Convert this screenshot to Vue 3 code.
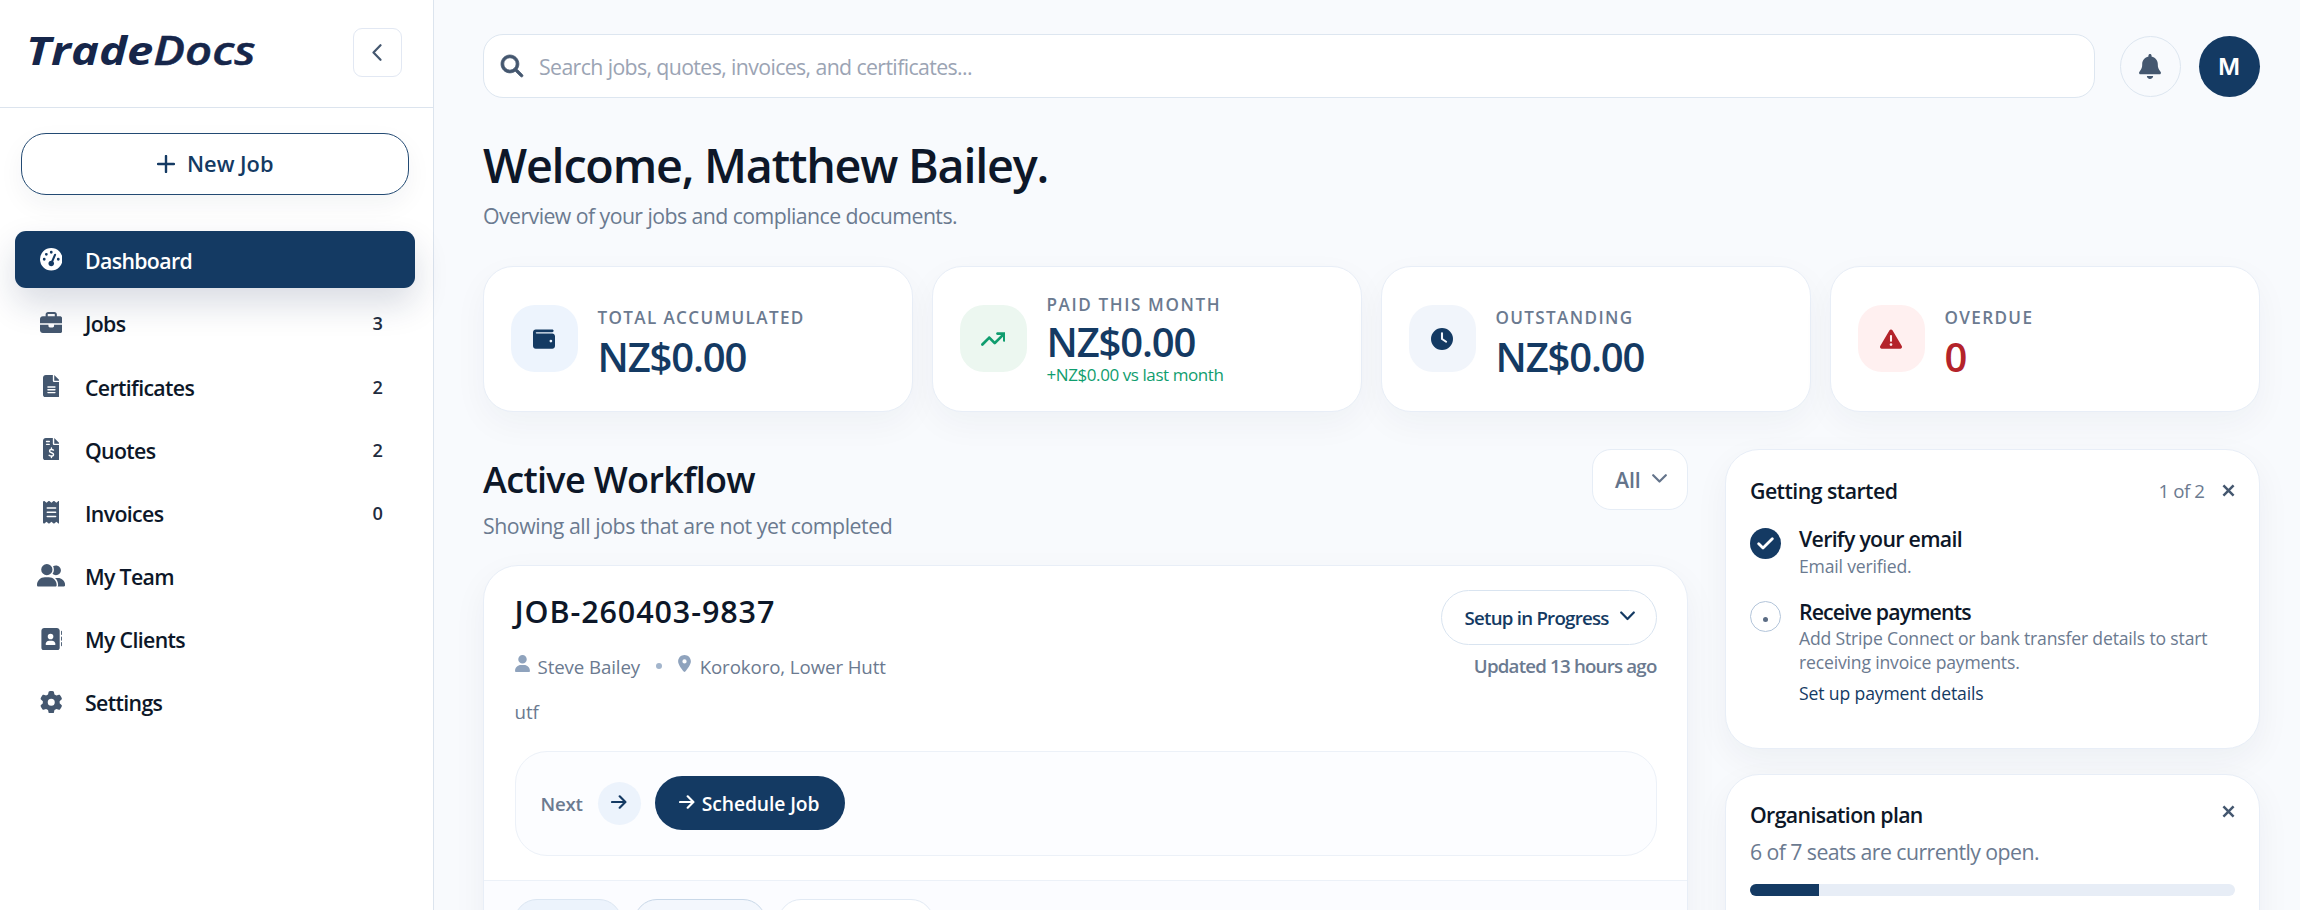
<script setup>
const icons = {
  gauge: { box: '0 0 512 512', d: 'M0 256a256 256 0 1 1 512 0A256 256 0 1 1 0 256zM288 96a32 32 0 1 0 -64 0 32 32 0 1 0 64 0zM256 416c35.3 0 64-28.7 64-64c0-17.4-6.9-33.1-18.1-44.6L366 161.7c5.3-12.1-.2-26.3-12.3-31.6s-26.3 .2-31.6 12.3L257.9 288c-.6 0-1.3 0-1.9 0c-35.3 0-64 28.7-64 64s28.7 64 64 64zM176 144a32 32 0 1 0 -64 0 32 32 0 1 0 64 0zM96 288a32 32 0 1 0 0-64 32 32 0 1 0 0 64zm352-32a32 32 0 1 0 -64 0 32 32 0 1 0 64 0z' },
  briefcase: { box: '0 0 512 512', d: 'M184 48H328c4.4 0 8 3.6 8 8V96H176V56c0-4.4 3.6-8 8-8zm-56 8V96H64C28.7 96 0 124.7 0 160v96H192 320 512V160c0-35.3-28.7-64-64-64H384V56c0-30.9-25.1-56-56-56H184c-30.9 0-56 25.1-56 56zM512 288H320v32c0 17.7-14.3 32-32 32H224c-17.7 0-32-14.3-32-32V288H0V416c0 35.3 28.7 64 64 64H448c35.3 0 64-28.7 64-64V288z' },
  file: { box: '0 0 384 512', d: 'M64 0C28.7 0 0 28.7 0 64V448c0 35.3 28.7 64 64 64H320c35.3 0 64-28.7 64-64V160H256c-17.7 0-32-14.3-32-32V0H64zM256 0V128H384L256 0zM112 256H272c8.8 0 16 7.2 16 16s-7.2 16-16 16H112c-8.8 0-16-7.2-16-16s7.2-16 16-16zm0 64H272c8.8 0 16 7.2 16 16s-7.2 16-16 16H112c-8.8 0-16-7.2-16-16s7.2-16 16-16zm0 64H272c8.8 0 16 7.2 16 16s-7.2 16-16 16H112c-8.8 0-16-7.2-16-16s7.2-16 16-16z' },
  quote: { box: '0 0 384 512', d: 'M64 0C28.7 0 0 28.7 0 64V448c0 35.3 28.7 64 64 64H320c35.3 0 64-28.7 64-64V160H256c-17.7 0-32-14.3-32-32V0H64zM256 0V128H384L256 0zM64 80c0-8.8 7.2-16 16-16h64c8.8 0 16 7.2 16 16s-7.2 16-16 16H80c-8.8 0-16-7.2-16-16zm0 64c0-8.8 7.2-16 16-16h64c8.8 0 16 7.2 16 16s-7.2 16-16 16H80c-8.8 0-16-7.2-16-16z', line: 'M192 228v32M192 412v34M238 276c-14-8-30-13-46-13c-26 0-44 12-44 34c0 52 92 24 92 76c0 24-20 36-48 36c-18 0-36-6-52-14' },
  receipt: { box: '0 0 384 512', d: 'M14 2.2C22.5-1.7 32.5-.3 39.6 5.8L80 40.4 120.4 5.8c9-7.7 22.3-7.7 31.2 0L192 40.4 232.4 5.8c9-7.7 22.3-7.7 31.2 0L304 40.4 344.4 5.8c7.1-6.1 17.1-7.5 25.6-3.6s14 12.4 14 21.8V488c0 9.4-5.5 17.9-14 21.8s-18.5 2.5-25.6-3.6L304 471.6l-40.4 34.6c-9 7.7-22.3 7.7-31.2 0L192 471.6l-40.4 34.6c-9 7.7-22.3 7.7-31.2 0L80 471.6 39.6 506.2c-7.1 6.1-17.1 7.5-25.6 3.6S0 497.4 0 488V24C0 14.6 5.5 6.1 14 2.2zM96 144c-8.8 0-16 7.2-16 16s7.2 16 16 16H288c8.8 0 16-7.2 16-16s-7.2-16-16-16H96zM80 352c0 8.8 7.2 16 16 16H288c8.8 0 16-7.2 16-16s-7.2-16-16-16H96c-8.8 0-16 7.2-16 16zM96 240c-8.8 0-16 7.2-16 16s7.2 16 16 16H288c8.8 0 16-7.2 16-16s-7.2-16-16-16H96z' },
  team: { box: '0 0 640 512', d: 'M96 128a128 128 0 1 1 256 0A128 128 0 1 1 96 128zM0 482.3C0 383.8 79.8 304 178.3 304h91.4C368.2 304 448 383.8 448 482.3c0 16.4-13.3 29.7-29.7 29.7H29.7C13.3 512 0 498.7 0 482.3zM609.3 512H471.4c5.4-9.4 8.6-20.3 8.6-32v-8c0-60.7-27.1-115.2-69.8-151.8c2.4-.1 4.7-.2 7.1-.2h61.4C567.8 320 640 392.2 640 481.3c0 17-13.8 30.7-30.7 30.7zM432 256c-31 0-59-12.6-79.3-32.9C372.4 196.5 384 163.6 384 128c0-26.8-6.6-52.1-18.3-74.3C384.3 40.1 407.2 32 432 32c61.9 0 112 50.1 112 112s-50.1 112-112 112z' },
  clients: { box: '0 0 512 512', d: 'M96 0C60.7 0 32 28.7 32 64V448c0 35.3 28.7 64 64 64H384c35.3 0 64-28.7 64-64V64c0-35.3-28.7-64-64-64H96zM208 288h64c44.2 0 80 35.8 80 80c0 8.8-7.2 16-16 16H144c-8.8 0-16-7.2-16-16c0-44.2 35.8-80 80-80zm-32-96a64 64 0 1 1 128 0 64 64 0 1 1 -128 0zM512 80c0-8.8-7.2-16-16-16s-16 7.2-16 16v64c0 8.8 7.2 16 16 16s16-7.2 16-16V80zM496 192c-8.8 0-16 7.2-16 16v64c0 8.8 7.2 16 16 16s16-7.2 16-16V208c0-8.8-7.2-16-16-16zm16 144c0-8.8-7.2-16-16-16s-16 7.2-16 16v64c0 8.8 7.2 16 16 16s16-7.2 16-16V336z' },
  gear: { box: '0 0 512 512', d: 'M495.9 166.6c3.2 8.7 .5 18.4-6.4 24.6l-43.3 39.4c1.1 8.3 1.7 16.8 1.7 25.4s-.6 17.1-1.7 25.4l43.3 39.4c6.9 6.2 9.6 15.9 6.4 24.6c-4.4 11.9-9.7 23.3-15.8 34.3l-4.7 8.1c-6.6 11-14 21.4-22.1 31.2c-5.9 7.2-15.7 9.6-24.5 6.8l-55.7-17.7c-13.4 10.3-28.2 18.9-44 25.4l-12.5 57.1c-2 9.1-9 16.3-18.2 17.8c-13.8 2.3-28 3.5-42.5 3.5s-28.7-1.2-42.5-3.5c-9.2-1.5-16.2-8.7-18.2-17.8l-12.5-57.1c-15.8-6.5-30.6-15.1-44-25.4L83.1 425.9c-8.8 2.8-18.6 .3-24.5-6.8c-8.1-9.8-15.5-20.2-22.1-31.2l-4.7-8.1c-6.1-11-11.4-22.4-15.8-34.3c-3.2-8.7-.5-18.4 6.4-24.6l43.3-39.4C64.6 273.1 64 264.6 64 256s.6-17.1 1.7-25.4L22.4 191.2c-6.9-6.2-9.6-15.9-6.4-24.6c4.4-11.9 9.7-23.3 15.8-34.3l4.7-8.1c6.6-11 14-21.4 22.1-31.2c5.9-7.2 15.7-9.6 24.5-6.8l55.7 17.7c13.4-10.3 28.2-18.9 44-25.4l12.5-57.1c2-9.1 9-16.3 18.2-17.8C227.3 1.2 241.5 0 256 0s28.7 1.2 42.5 3.5c9.2 1.5 16.2 8.7 18.2 17.8l12.5 57.1c15.8 6.5 30.6 15.1 44 25.4l55.7-17.7c8.8-2.8 18.6-.3 24.5 6.8c8.1 9.8 15.5 20.2 22.1 31.2l4.7 8.1c6.1 11 11.4 22.4 15.8 34.3zM256 336a80 80 0 1 0 0-160 80 80 0 1 0 0 160z' },
  wallet: { box: '0 0 512 512', d: 'M64 32C28.7 32 0 60.7 0 96V416c0 35.3 28.7 64 64 64H448c35.3 0 64-28.7 64-64V192c0-35.3-28.7-64-64-64H80c-8.8 0-16-7.2-16-16s7.2-16 16-16H448c17.7 0 32-14.3 32-32s-14.3-32-32-32H64zM416 272a32 32 0 1 1 0 64 32 32 0 1 1 0-64z' },
  trend: { box: '0 0 576 512', d: 'M384 96c-17.7 0-32 14.3-32 32s14.3 32 32 32h82.7L320 306.7l-105.4-105.3c-12.5-12.5-32.8-12.5-45.3 0l-160 160c-12.5 12.5-12.5 32.8 0 45.3s32.8 12.5 45.3 0L192 269.3l105.4 105.3c12.5 12.5 32.8 12.5 45.3 0L512 205.3V288c0 17.7 14.3 32 32 32s32-14.3 32-32V128c0-17.7-14.3-32-32-32H384z' },
  clock: { box: '0 0 512 512', d: 'M256 0a256 256 0 1 1 0 512A256 256 0 1 1 256 0zM232 120V256c0 8 4 15.5 10.7 20l96 64c11 7.4 25.9 4.4 33.3-6.7s4.4-25.9-6.7-33.3L280 243.2V120c0-13.3-10.7-24-24-24s-24 10.7-24 24z' },
  warning: { box: '0 0 512 512', d: 'M256 32c14.2 0 27.3 7.5 34.5 19.8l216 368c7.3 12.4 7.3 27.7 .2 40.1S486.3 480 472 480H40c-14.3 0-27.6-7.7-34.7-20.1s-7-27.8 .2-40.1l216-368C228.7 39.5 241.8 32 256 32zm0 128c-13.3 0-24 10.7-24 24V296c0 13.3 10.7 24 24 24s24-10.7 24-24V184c0-13.3-10.7-24-24-24zm32 224a32 32 0 1 0 -64 0 32 32 0 1 0 64 0z' }
}

const nav = [
  { label: 'Dashboard', icon: 'gauge', active: true },
  { label: 'Jobs', icon: 'briefcase', count: 3 },
  { label: 'Certificates', icon: 'file', count: 2 },
  { label: 'Quotes', icon: 'quote', count: 2 },
  { label: 'Invoices', icon: 'receipt', count: 0 },
  { label: 'My Team', icon: 'team' },
  { label: 'My Clients', icon: 'clients' },
  { label: 'Settings', icon: 'gear' }
]

const stats = [
  { label: 'Total accumulated', value: 'NZ$0.00', icon: 'wallet', tone: 'blue' },
  { label: 'Paid this month', value: 'NZ$0.00', icon: 'trend', tone: 'green', note: '+NZ$0.00 vs last month' },
  { label: 'Outstanding', value: 'NZ$0.00', icon: 'clock', tone: 'slate' },
  { label: 'Overdue', value: '0', icon: 'warning', tone: 'red' }
]

const seats = { total: 7, open: 6 }
const seatsUsed = ((seats.total - seats.open) / seats.total) * 100 + '%'
</script>

<template>
  <div class="app">
    <aside class="sidebar">
      <header class="brand">
        <div class="logo"><b>Trade</b><span>Docs</span></div>
        <button class="collapse" aria-label="Collapse">
          <svg width="10" height="17" viewBox="0 0 10 17"><path d="M8.5 1.2 1.5 8.5l7 7.3" /></svg>
        </button>
      </header>
      <button class="new-job">
        <svg width="18" height="18" viewBox="0 0 18 18"><path d="M9 1v16M1 9h16" /></svg>
        <span>New Job</span>
      </button>
      <nav class="nav">
        <a v-for="n in nav" :key="n.label" class="nav-item" :class="{ active: n.active }">
          <span class="nav-icon">
            <svg height="22.5" :viewBox="icons[n.icon].box">
              <path :d="icons[n.icon].d" />
              <path v-if="icons[n.icon].line" class="cut" :d="icons[n.icon].line" />
            </svg>
          </span>
          <span class="nav-label">{{ n.label }}</span>
          <span v-if="n.count !== undefined" class="count">{{ n.count }}</span>
        </a>
      </nav>
    </aside>

    <main class="main">
      <div class="topbar">
        <div class="search">
          <svg width="22" height="22" viewBox="0 0 512 512"><path d="M416 208c0 45.9-14.9 88.3-40 122.7L502.6 457.4c12.5 12.5 12.5 32.8 0 45.3s-32.8 12.5-45.3 0L330.7 376c-34.4 25.2-76.8 40-122.7 40C93.1 416 0 322.9 0 208S93.1 0 208 0S416 93.1 416 208zM208 352a144 144 0 1 0 0-288 144 144 0 1 0 0 288z" /></svg>
          <span>Search jobs, quotes, invoices, and certificates...</span>
        </div>
        <div class="bell">
          <svg width="22" height="25" viewBox="0 0 448 512"><path d="M224 0c-17.7 0-32 14.3-32 32V51.2C119 66 64 130.6 64 208v18.8c0 47-17.3 92.4-48.5 127.6l-7.4 8.3c-8.4 9.4-10.4 22.9-5.3 34.4S19.4 416 32 416H416c12.6 0 24-7.4 29.2-18.9s3.1-25-5.3-34.4l-7.4-8.3C401.3 319.2 384 273.9 384 226.8V208c0-77.4-55-142-128-156.8V32c0-17.7-14.3-32-32-32zm45.3 493.3c12-12 18.7-28.3 18.7-45.3H224 160c0 17 6.7 33.3 18.7 45.3s28.3 18.7 45.3 18.7s33.3-6.7 45.3-18.7z" /></svg>
        </div>
        <div class="avatar">M</div>
      </div>

      <h1>Welcome, Matthew Bailey.</h1>
      <p class="lead overview">Overview of your jobs and compliance documents.</p>

      <section class="stats">
        <article v-for="s in stats" :key="s.label" class="stat" :class="s.tone">
          <div class="stat-icon">
            <svg :viewBox="icons[s.icon].box" height="22"><path :d="icons[s.icon].d" /></svg>
          </div>
          <div class="stat-text">
            <div class="stat-label">{{ s.label }}</div>
            <div class="stat-value">{{ s.value }}</div>
            <div v-if="s.note" class="stat-note">{{ s.note }}</div>
          </div>
        </article>
      </section>

      <div class="columns">
        <section class="workflow">
          <div class="workflow-head">
            <div>
              <h2>Active Workflow</h2>
              <p class="lead showing">Showing all jobs that are not yet completed</p>
            </div>
            <button class="filter">
              <span>All</span>
              <svg width="15" height="9" viewBox="0 0 15 9"><path d="M1.2 1.2 7.5 7.5l6.3-6.3" /></svg>
            </button>
          </div>

          <article class="job">
            <div class="job-body">
              <div class="job-top">
                <div>
                  <h3>JOB-260403-9837</h3>
                  <div class="meta">
                    <svg width="15" height="17" viewBox="0 0 448 512"><path d="M224 256A128 128 0 1 0 224 0a128 128 0 1 0 0 256zm-45.7 48C79.8 304 0 383.8 0 482.3C0 498.7 13.3 512 29.7 512H418.3c16.4 0 29.7-13.3 29.7-29.7C448 383.8 368.2 304 269.7 304H178.3z" /></svg>
                    <span class="client">Steve Bailey</span>
                    <i class="dot"></i>
                    <svg class="pin" width="13" height="17" viewBox="0 0 384 512"><path d="M215.7 499.2C267 435 384 279.4 384 192C384 86 298 0 192 0S0 86 0 192c0 87.4 117 243 168.3 307.2c12.3 15.3 35.1 15.3 47.4 0zM192 128a64 64 0 1 1 0 128 64 64 0 1 1 0-128z" /></svg>
                    <span class="place">Korokoro, Lower Hutt</span>
                  </div>
                </div>
                <div class="job-side">
                  <button class="status">
                    <span>Setup in Progress</span>
                    <svg width="15" height="10" viewBox="0 0 15 10"><path d="M1.2 1.5 7.5 8l6.3-6.5" /></svg>
                  </button>
                  <div class="updated">Updated 13 hours ago</div>
                </div>
              </div>
              <p class="note">utf</p>
              <div class="next">
                <span class="next-label">Next</span>
                <span class="next-arrow">
                  <svg width="16" height="14" viewBox="0 0 16 14"><path d="M1 7h13M8.7 1.3 14.4 7l-5.7 5.7" /></svg>
                </span>
                <button class="schedule">
                  <svg width="16" height="14" viewBox="0 0 16 14"><path d="M1 7h13M8.7 1.3 14.4 7l-5.7 5.7" /></svg>
                  <span>Schedule Job</span>
                </button>
              </div>
            </div>
            <div class="job-foot">
              <span class="chip chip-a"></span>
              <span class="chip chip-b"></span>
              <span class="chip chip-c"></span>
            </div>
          </article>
        </section>

        <aside class="side">
          <article class="panel started">
            <div class="panel-head">
              <h4 class="t-started">Getting started</h4>
              <div class="panel-tools">
                <span>1 of 2</span>
                <svg width="13" height="13" viewBox="0 0 12 12"><path d="m1.3 1.3 9.4 9.4m0-9.4-9.4 9.4" /></svg>
              </div>
            </div>
            <div class="step">
              <div class="mark done">
                <svg width="17" height="13" viewBox="0 0 17 13"><path d="m1.7 6.7 4.3 4.3 9.3-9.3" /></svg>
              </div>
              <div class="step-text">
                <h4>Verify your email</h4>
                <p>Email verified.</p>
              </div>
            </div>
            <div class="step">
              <div class="mark todo"><i></i></div>
              <div class="step-text">
                <h4 class="t-receive">Receive payments</h4>
                <p>Add Stripe Connect or bank transfer details to start receiving invoice payments.</p>
                <a>Set up payment details</a>
              </div>
            </div>
          </article>

          <article class="panel plan">
            <div class="panel-head">
              <h4 class="t-plan">Organisation plan</h4>
              <svg width="13" height="13" viewBox="0 0 12 12"><path d="m1.3 1.3 9.4 9.4m0-9.4-9.4 9.4" /></svg>
            </div>
            <p class="seats">{{ seats.open }} of {{ seats.total }} seats are currently open.</p>
            <div class="bar"><div class="fill" :style="{ width: seatsUsed }"></div></div>
          </article>
        </aside>
      </div>
    </main>
  </div>
</template>

<style>
body { margin: 0; overflow: hidden; }
</style>

<style scoped>
* { box-sizing: border-box; margin: 0; }
.app {
  display: flex;
  height: 910px;
  overflow: hidden;
  background: #f8fafd;
  color: #0d1728;
  font-family: "Open Sans", "Noto Sans", sans-serif;
  font-size: 21.3px;
}
button { font: inherit; padding: 0; }
svg { display: block; flex: none; fill: currentColor; fill-rule: evenodd; }
h1, h2, h3, h4 { font-weight: 600; }

.sidebar { flex: none; width: 434px; background: #fff; border-right: 1px solid #dce4ee; }
.brand {
  display: flex;
  justify-content: space-between;
  height: 108px;
  padding: 28px 31px 0 26px;
  border-bottom: 1px solid #dce4ee;
}
.logo {
  width: 228px;
  height: 44px;
  line-height: 44px;
  font-size: 40px;
  font-style: italic;
  color: #16264a;
  white-space: nowrap;
  transform: scaleX(1.18);
  transform-origin: 0 50%;
}
.logo b { font-weight: 700; }
.logo span { font-weight: 600; -webkit-text-stroke: 0.5px #16264a; }
.collapse {
  display: grid;
  place-items: center;
  width: 49px;
  height: 49px;
  padding-right: 1px;
  border: 1px solid #e2e8f3;
  border-radius: 9px;
  background: #fff;
  color: #44576f;
}
.collapse svg, .filter svg, .status svg { fill: none; stroke: currentColor; stroke-width: 2.2; stroke-linecap: round; stroke-linejoin: round; }
.new-job {
  display: flex;
  align-items: center;
  justify-content: center;
  gap: 12.5px;
  width: 388px;
  height: 62px;
  margin: 24.5px 0 0 21px;
  border: 1px solid #234a73;
  border-radius: 25px;
  background: #fff;
  color: #143a63;
  font-size: 21.8px;
  font-weight: 600;
  letter-spacing: 0;
  box-shadow: 0 10px 26px rgba(15, 35, 60, 0.05);
}
.new-job svg { fill: none; stroke: currentColor; stroke-width: 2.4; stroke-linecap: round; }
.nav { display: flex; flex-direction: column; gap: 5.9px; margin: 36.5px 0 0 14.5px; width: 400px; }
.nav-item {
  display: flex;
  align-items: center;
  height: 57.3px;
  padding: 0 31.5px 0 12px;
  border-radius: 11px;
  font-weight: 600;
}
.nav-icon { display: flex; justify-content: center; width: 49px; margin-right: 9.5px; color: #44576f; }
.cut { fill: none; stroke: #fff; stroke-width: 32; stroke-linecap: round; }
.nav-label { flex: 1; letter-spacing: -0.65px; padding-top: 2px; }
.count { padding-top: 1px; font-size: 18.2px; color: #1f2c40; }
.nav-item.active { background: #143a63; color: #fff; box-shadow: 0 16px 34px rgba(20, 40, 80, 0.16); }
.active .nav-icon { color: #fff; }

.main { flex: 1; min-width: 0; padding: 34px 40.5px 0 49px; }
.topbar { display: flex; align-items: center; }
.search {
  display: flex;
  align-items: center;
  flex: 1;
  gap: 16px;
  height: 64px;
  padding-left: 17px;
  border: 1px solid #dde6f0;
  border-radius: 20px;
  background: #fff;
  color: #9ba4b4;
  letter-spacing: -0.62px;
}
.search svg { color: #44576f; stroke: currentColor; stroke-width: 18; overflow: visible; }
.search span { padding-top: 1px; }
.bell, .avatar { display: grid; place-items: center; width: 61px; height: 61px; border-radius: 50%; }
.bell { margin: 0 18px 0 24.5px; border: 1px solid #dde6f0; color: #44576f; }
.avatar { background: #143a63; color: #fff; font: 600 23.5px Inter, sans-serif; }
h1 { margin-top: 38.5px; font-size: 46.7px; line-height: 56px; letter-spacing: -1.22px; }
.lead { line-height: 30px; color: #6b7a90; }
.overview { margin-top: 8.5px; letter-spacing: -0.57px; }

.stats { display: grid; grid-template-columns: repeat(4, 1fr); gap: 19.5px; margin-top: 35px; }
.stat {
  display: flex;
  align-items: center;
  gap: 20px;
  height: 146px;
  padding-left: 26.5px;
  border: 1px solid #e8eef7;
  border-radius: 30px;
  background: #fff;
  box-shadow: 0 12px 34px rgba(15, 35, 60, 0.045);
}
.stat-icon { display: grid; place-items: center; width: 67px; height: 67px; margin-top: -1px; border-radius: 24px; color: #143a63; }
.blue .stat-icon { background: #edf4fd; }
.green .stat-icon { background: #ecf7f0; color: #0f9d6e; }
.slate .stat-icon { background: #f1f5fb; }
.red .stat-icon { background: #fff0f0; color: #b4232a; }
.stat-text { padding-top: 10.5px; }
.stat-label { font-size: 17.1px; line-height: 24px; font-weight: 600; letter-spacing: 1.35px; text-transform: uppercase; color: #6b7a90; }
.stat-value { margin-top: 1px; font-size: 40px; line-height: 52px; font-weight: 600; letter-spacing: -1.15px; color: #143a63; }
.green .stat-label { letter-spacing: 1.6px; }
.green .stat-text { padding-top: 1px; }
.green .stat-value { margin-top: 0; line-height: 50px; }
.stat-note { margin-top: -3.5px; font-size: 17px; line-height: 22px; letter-spacing: -0.42px; color: #0f9d6e; }
.red .stat-value { color: #b4232a; }

.columns { display: flex; justify-content: space-between; align-items: flex-start; margin-top: 37px; }
.workflow { width: 1204.5px; }
.workflow-head { display: flex; justify-content: space-between; align-items: flex-start; }
h2 { margin-top: 8.5px; font-size: 36px; line-height: 44px; letter-spacing: -0.65px; }
.showing { margin-top: 9.5px; letter-spacing: -0.45px; }
.filter {
  display: flex;
  align-items: center;
  gap: 11px;
  width: 95.5px;
  height: 60.5px;
  padding-left: 22px;
  border: 1px solid #e6edf6;
  border-radius: 19px;
  background: #fff;
  color: #64748b;
  font-weight: 600;
}
.filter span { letter-spacing: -0.1px; }
.filter svg { margin-top: -2px; }
.job { height: 420px; margin-top: 23.5px; border: 1px solid #e8eef7; border-radius: 35px; background: #fff; box-shadow: 0 12px 34px rgba(15, 35, 60, 0.05); }
.job-body { padding: 24.5px 30px 24px 30.5px; }
.job-top { display: flex; justify-content: space-between; }
h3 { padding-top: 1px; font-size: 30.5px; line-height: 40px; letter-spacing: 0.9px; }
.meta { display: flex; align-items: center; height: 28px; margin-top: 21px; font-size: 18.7px; color: #6b7a90; letter-spacing: -0.1px; }
.meta svg { color: #8fa3bd; margin-top: -6px; }
.client { margin-left: 8px; }
.dot { width: 6px; height: 6px; margin: 0 16px; border-radius: 50%; background: #a3b5cc; }
.place { margin-left: 8.5px; }
.job-side { text-align: right; font-size: 18.7px; font-weight: 600; }
.status {
  display: flex;
  align-items: center;
  justify-content: space-between;
  width: 215.5px;
  height: 54.5px;
  padding: 0 20.5px 0 22.5px;
  border: 1px solid #d9e4f0;
  border-radius: 28px;
  background: #fff;
  color: #143a63;
  letter-spacing: -0.76px;
}
.status svg { margin-top: -2px; }
.updated { margin-top: 7px; line-height: 28px; color: #6b7a90; letter-spacing: -0.8px; }
.note { margin-top: 17.5px; font-size: 18.7px; line-height: 28px; color: #6b7a90; }
.next { display: flex; align-items: center; height: 105px; margin-top: 25px; padding-left: 25px; border: 1px solid #ecf1f8; border-radius: 32px; background: #fcfdff; font-size: 18.7px; font-weight: 600; }
.next span:not(.next-arrow) { padding-top: 1px; }
.next-label { color: #6b7a90; letter-spacing: -0.2px; }
.next svg { fill: none; stroke: currentColor; stroke-width: 2.2; stroke-linecap: round; stroke-linejoin: round; margin-top: -3px; }
.next-arrow { display: grid; place-items: center; width: 43px; height: 43px; margin: 0 14px 0 15px; border-radius: 50%; background: #ecf3fc; color: #143a63; }
.schedule { display: flex; align-items: center; gap: 7px; width: 190px; height: 54.5px; padding-left: 24px; border: 0; border-radius: 27px; background: #143a63; color: #fff; font-size: 19.3px; letter-spacing: -0.1px; white-space: nowrap; }
.job-foot { display: flex; height: 120px; padding: 18px 30px; border-top: 1px solid #ecf1f8; background: #fbfcff; }
.chip { height: 46px; border: 1px solid #dbe6f2; border-radius: 23px; }
.chip-a { width: 108px; background: #ecf3fc; }
.chip-b { width: 132px; margin: 0 12px; border-color: #c9d8e8; background: #f3f7fd; }
.chip-c { width: 156px; background: #fff; border-color: #e2eaf4; }

.side { width: 534.5px; }
.panel { padding: 0 24px; border: 1px solid #e8eef7; border-radius: 34px; background: #fff; box-shadow: 0 12px 34px rgba(15, 35, 60, 0.05); }
.panel-head { display: flex; align-items: center; justify-content: space-between; }
.panel h4 { font-size: 21.3px; line-height: 30px; letter-spacing: -0.7px; }
.panel .t-started { letter-spacing: -0.55px; }
.panel .t-receive { letter-spacing: -0.88px; }
.panel .t-plan { letter-spacing: -0.65px; }
.panel-head svg { fill: none; stroke: #44576f; stroke-width: 2.3; }
.started { height: 299.5px; padding-top: 25.5px; }
.panel-tools { display: flex; align-items: center; gap: 17px; font-size: 18.7px; color: #6b7a90; letter-spacing: -0.45px; }
.step { display: flex; gap: 18px; }
.mark { display: grid; place-items: center; flex: none; width: 31px; height: 31px; margin-top: 4px; border-radius: 50%; }
.panel-head + .step { margin-top: 18.5px; }
.step + .step { margin-top: 19px; }
.done { background: #143a63; color: #fff; }
.done svg { fill: none; stroke: currentColor; stroke-width: 2.8; stroke-linecap: round; stroke-linejoin: round; }
.todo { border: 1px solid #b3c5da; }
.todo i { width: 5px; height: 5px; margin-top: 6px; border-radius: 50%; background: #5b6c84; }
.step-text p { margin-top: -0.5px; font-size: 17.6px; line-height: 24px; color: #6b7a90; letter-spacing: -0.18px; }
.step-text a { display: block; margin-top: 5.5px; font-size: 17.6px; line-height: 26px; color: #143a63; letter-spacing: -0.14px; }
.plan { height: 220px; margin-top: 25.5px; padding-top: 24.5px; }
.plan .panel-head svg { margin-top: -7px; }
.seats { margin-top: 7px; line-height: 30px; color: #6b7a90; letter-spacing: -0.58px; }
.bar { height: 12.5px; margin-top: 17px; border-radius: 6px; overflow: hidden; background: #e7edf6; }
.fill { height: 100%; background: #143a63; }
</style>
